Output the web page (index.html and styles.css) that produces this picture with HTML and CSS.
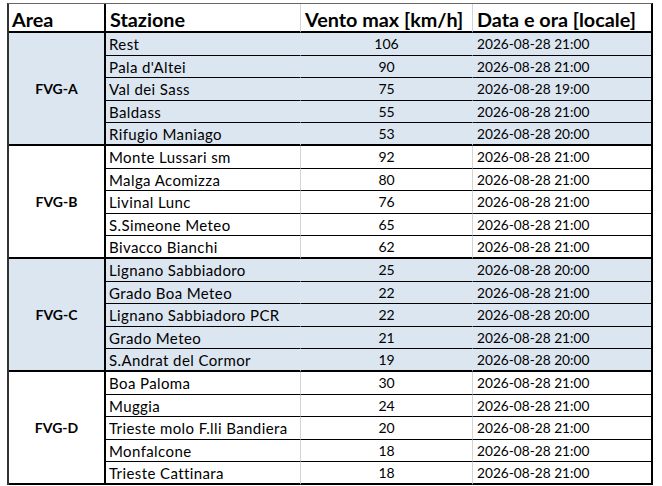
FILE: index.html
```html
<!DOCTYPE html>
<html lang="it">
<head>
<meta charset="utf-8">
<title>Vento max</title>
<link rel="stylesheet" href="styles.css">
</head>
<body>
<table class="wind">
  <colgroup>
    <col class="w-area"><col class="w-st"><col class="w-v"><col class="w-d">
  </colgroup>
  <thead>
    <tr><th class="area">Area</th><th class="st">Stazione</th><th class="v">Vento max [km/h]</th><th class="d">Data e ora [locale]</th></tr>
  </thead>
  <tbody class="blue">
    <tr><td class="area" rowspan="5">FVG-A</td><td class="st">Rest</td><td class="v">106</td><td class="d">2026-08-28 21:00</td></tr>
    <tr><td class="st">Pala d'Altei</td><td class="v">90</td><td class="d">2026-08-28 21:00</td></tr>
    <tr><td class="st">Val dei Sass</td><td class="v">75</td><td class="d">2026-08-28 19:00</td></tr>
    <tr><td class="st">Baldass</td><td class="v">55</td><td class="d">2026-08-28 21:00</td></tr>
    <tr><td class="st">Rifugio Maniago</td><td class="v">53</td><td class="d">2026-08-28 20:00</td></tr>
  </tbody>
  <tbody class="white">
    <tr><td class="area" rowspan="5">FVG-B</td><td class="st">Monte Lussari sm</td><td class="v">92</td><td class="d">2026-08-28 21:00</td></tr>
    <tr><td class="st">Malga Acomizza</td><td class="v">80</td><td class="d">2026-08-28 21:00</td></tr>
    <tr><td class="st">Livinal Lunc</td><td class="v">76</td><td class="d">2026-08-28 21:00</td></tr>
    <tr><td class="st">S.Simeone Meteo</td><td class="v">65</td><td class="d">2026-08-28 21:00</td></tr>
    <tr><td class="st">Bivacco Bianchi</td><td class="v">62</td><td class="d">2026-08-28 21:00</td></tr>
  </tbody>
  <tbody class="blue">
    <tr><td class="area" rowspan="5">FVG-C</td><td class="st">Lignano Sabbiadoro</td><td class="v">25</td><td class="d">2026-08-28 20:00</td></tr>
    <tr><td class="st">Grado Boa Meteo</td><td class="v">22</td><td class="d">2026-08-28 21:00</td></tr>
    <tr><td class="st">Lignano Sabbiadoro PCR</td><td class="v">22</td><td class="d">2026-08-28 20:00</td></tr>
    <tr><td class="st">Grado Meteo</td><td class="v">21</td><td class="d">2026-08-28 21:00</td></tr>
    <tr><td class="st">S.Andrat del Cormor</td><td class="v">19</td><td class="d">2026-08-28 20:00</td></tr>
  </tbody>
  <tbody class="white">
    <tr><td class="area" rowspan="5">FVG-D</td><td class="st">Boa Paloma</td><td class="v">30</td><td class="d">2026-08-28 21:00</td></tr>
    <tr><td class="st">Muggia</td><td class="v">24</td><td class="d">2026-08-28 21:00</td></tr>
    <tr><td class="st">Trieste molo F.lli Bandiera</td><td class="v">20</td><td class="d">2026-08-28 21:00</td></tr>
    <tr><td class="st">Monfalcone</td><td class="v">18</td><td class="d">2026-08-28 21:00</td></tr>
    <tr><td class="st">Trieste Cattinara</td><td class="v">18</td><td class="d">2026-08-28 21:00</td></tr>
  </tbody>
</table>
</body>
</html>
```

FILE: styles.css
```css
html, body {
  margin: 0;
  padding: 0;
  background: #ffffff;
}

body {
  font-family: Lato, "Liberation Sans", sans-serif;
  color: #000000;
}

.wind {
  box-sizing: border-box;
  width: 646px;
  margin: 3px 0 0 7px;
  border-collapse: separate;
  border-spacing: 0;
  table-layout: fixed;
  border-top: 1px solid #666666;
  border-left: 2px solid #333333;
  border-right: 2px solid #000000;
}

.w-area { width: 97px; }
.w-st { width: 195px; }
.w-v { width: 172px; }
.w-d { width: 178px; }

.wind th,
.wind td {
  box-sizing: border-box;
  padding: 0;
  border: 0;
  white-space: nowrap;
  overflow: hidden;
}

.wind th {
  height: 29px;
  border-bottom: 2px solid #000000;
  font-size: 19.8px;
  font-weight: 700;
  line-height: 22px;
  text-align: left;
  vertical-align: bottom;
  padding-bottom: 1px;
}

.wind th.area { padding-left: 3px; border-right: 2px solid #000000; }
.wind th.st { padding-left: 4px; border-right: 1px solid #d4d4d4; }
.wind th.v { padding-left: 4px; border-right: 1px solid #d4d4d4; }
.wind th.d { padding-left: 4px; }

.wind tbody tr { height: 22.6px; }

.wind td {
  border-bottom: 1px solid #000000;
  font-size: 13.7px;
  line-height: 16px;
  vertical-align: middle;
  padding-top: 1px;
}

.wind tbody tr:last-child td { border-bottom-width: 2px; }

.wind td.area {
  border-right: 2px solid #000000;
  border-bottom: 2px solid #000000;
  text-align: center;
  font-weight: 700;
  font-size: 14px;
}

.wind td.st {
  padding-left: 3px;
  font-size: 15px;
  letter-spacing: 0.4px;
}
.wind td.v { text-align: center; font-size: 14px; }
.wind td.d { padding-left: 4px; }

.blue td { background: #dce6f1; }
.blue td.st, .blue td.v { border-right: 1px solid #dce6f1; }
.white td.st, .white td.v { border-right: 1px solid #d4d4d4; }
```
